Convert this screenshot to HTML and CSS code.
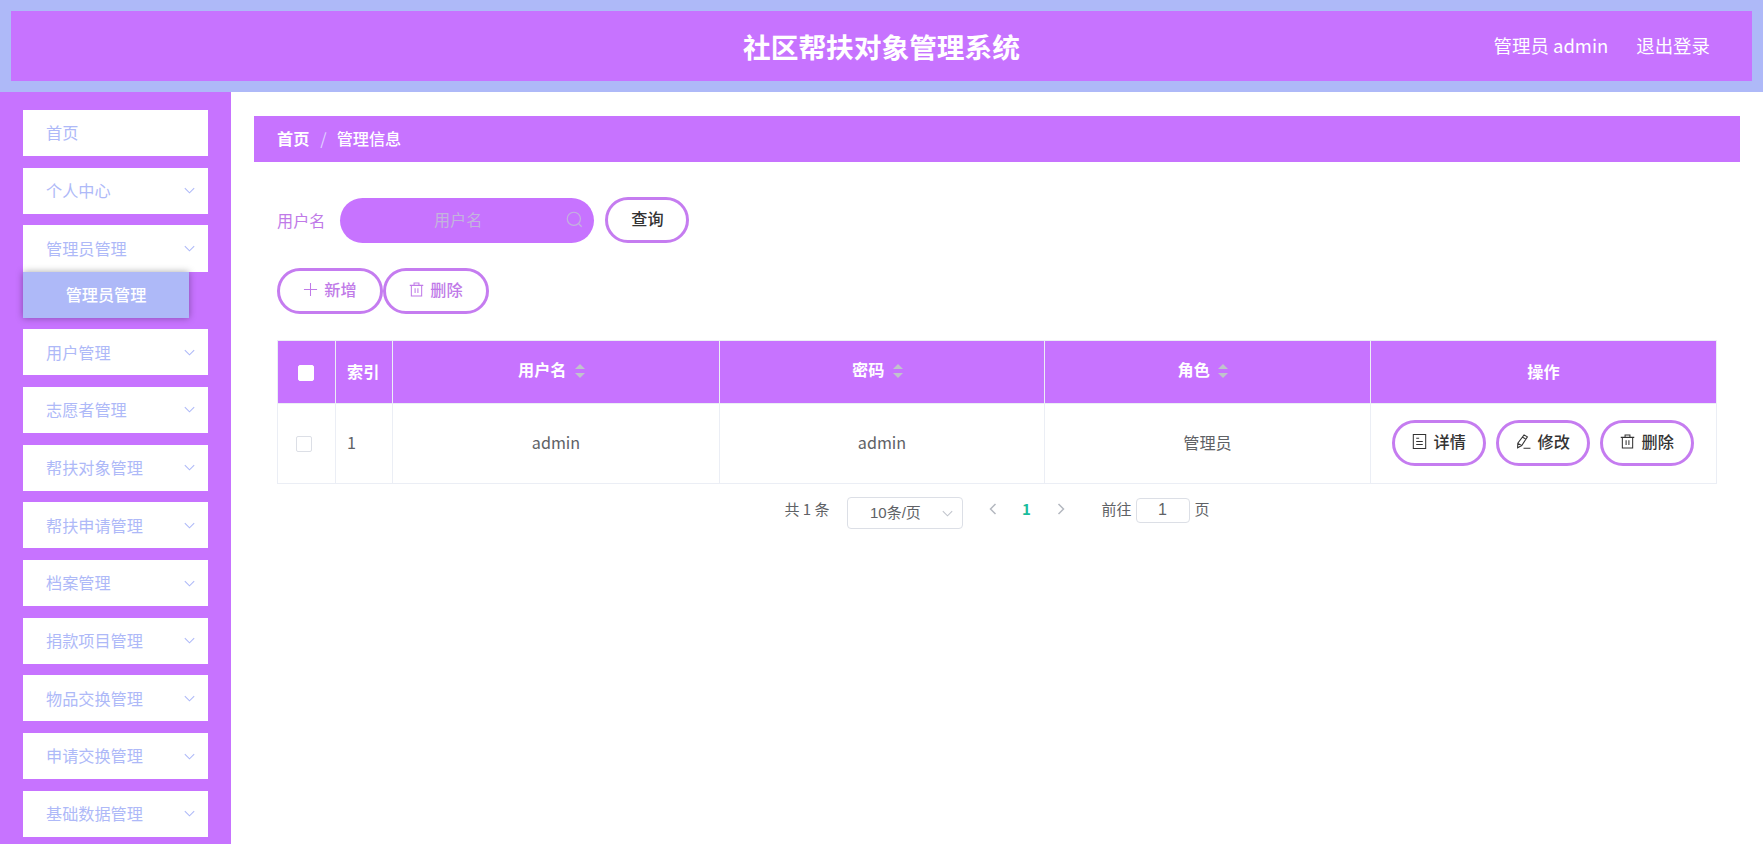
FILE: index.html
```
<!DOCTYPE html>
<html lang="zh-CN">
<head>
<meta charset="utf-8">
<title>社区帮扶对象管理系统</title>
<link rel="stylesheet" href="styles.css">
</head>
<body>
<svg class="defs" width="0" height="0">
  <symbol id="down" viewBox="0 0 16 16"><path d="M3 5.4 8 10.4 13 5.4"/></symbol>
  <symbol id="trash" viewBox="0 0 16 16"><path d="M.8 3.6H15.2M2.5 3.6V15H13.5V3.6M5.4 3.6V1H10.6V3.6M6.5 6.7V11.7M9.5 6.7V11.7"/></symbol>
  <symbol id="plus" viewBox="0 0 16 16"><path d="M8 1V15M1 8H15"/></symbol>
  <symbol id="doc" viewBox="0 0 16 16"><path d="M1.4 .6H14.6V15.4H1.4ZM4.5 4.6H7.6M4.5 8H11.5M4.5 11.2H11.5"/></symbol>
  <symbol id="edit" viewBox="0 0 16 16"><path d="M8.6 .9 12.2 3 6.1 12.3 1.7 14.7 1.9 9.8ZM7 3.4 10.6 5.5M2.1 10 5.9 12.3M8 15.2H15.4"/></symbol>
  <symbol id="search" viewBox="0 0 16 16"><circle cx="7.4" cy="7.4" r="6.2"/><path d="M12 12 14.8 14.8"/></symbol>
</svg>
<header class="header">
  <h1 class="title">社区帮扶对象管理系统</h1>
  <div class="account"><span>管理员 admin</span><span>退出登录</span></div>
</header>
<div class="layout">
  <nav class="sidebar">
    <div class="item">首页</div>
    <div class="item">个人中心<svg class="arrow"><use href="#down"/></svg></div>
    <div class="group">
      <div class="item">管理员管理<svg class="arrow"><use href="#down"/></svg></div>
      <div class="subitem">管理员管理</div>
    </div>
    <div class="item">用户管理<svg class="arrow"><use href="#down"/></svg></div>
    <div class="item">志愿者管理<svg class="arrow"><use href="#down"/></svg></div>
    <div class="item">帮扶对象管理<svg class="arrow"><use href="#down"/></svg></div>
    <div class="item">帮扶申请管理<svg class="arrow"><use href="#down"/></svg></div>
    <div class="item">档案管理<svg class="arrow"><use href="#down"/></svg></div>
    <div class="item">捐款项目管理<svg class="arrow"><use href="#down"/></svg></div>
    <div class="item">物品交换管理<svg class="arrow"><use href="#down"/></svg></div>
    <div class="item">申请交换管理<svg class="arrow"><use href="#down"/></svg></div>
    <div class="item">基础数据管理<svg class="arrow"><use href="#down"/></svg></div>
  </nav>
  <main class="main">
    <div class="breadcrumb"><b>首页</b><span class="slash">/</span><span class="current">管理信息</span></div>
    <div class="content">
      <div class="search">
        <span class="label">用户名</span>
        <div class="field"><span class="placeholder">用户名</span><svg class="icon"><use href="#search"/></svg></div>
        <button class="btn query">查询</button>
      </div>
      <div class="tools">
        <button class="btn tool"><svg class="icon"><use href="#plus"/></svg>新增</button>
        <button class="btn tool"><svg class="icon"><use href="#trash"/></svg>删除</button>
      </div>
      <div class="table">
        <div class="row head">
          <div class="cell check"><i class="box"></i></div>
          <div class="cell index">索引</div>
          <div class="cell sortable">用户名<i class="sort"></i></div>
          <div class="cell sortable">密码<i class="sort"></i></div>
          <div class="cell sortable">角色<i class="sort"></i></div>
          <div class="cell">操作</div>
        </div>
        <div class="row body">
          <div class="cell check"><i class="box"></i></div>
          <div class="cell index">1</div>
          <div class="cell">admin</div>
          <div class="cell">admin</div>
          <div class="cell">管理员</div>
          <div class="cell actions">
            <button class="btn act"><svg class="icon"><use href="#doc"/></svg>详情</button>
            <button class="btn act"><svg class="icon"><use href="#edit"/></svg>修改</button>
            <button class="btn act"><svg class="icon"><use href="#trash"/></svg>删除</button>
          </div>
        </div>
      </div>
      <div class="pager">
        <span class="total">共 1 条</span>
        <div class="size"><span>10条/页</span><svg class="arrow"><use href="#down"/></svg></div>
        <svg class="page-arrow" viewBox="0 0 10 14"><path d="M7.5 2 2.5 7 7.5 12"/></svg>
        <b class="page">1</b>
        <svg class="page-arrow" viewBox="0 0 10 14"><path d="M2.5 2 7.5 7 2.5 12"/></svg>
        <span class="goto">前往</span>
        <span class="jump">1</span>
        <span>页</span>
      </div>
    </div>
  </main>
</div>
</body>
</html>
```
FILE: styles.css
```
* { box-sizing: border-box; }
body {
  margin: 0;
  height: 844px;
  overflow: hidden;
  background: #fff;
  color: #606266;
  font: 16.15px/1.5 "Noto Sans CJK SC", sans-serif;
}
svg { fill: none; stroke: currentColor; flex: none; }
.defs { position: absolute; }
.header {
  height: 92px;
  border: 11.5px solid #aeb9f8;
  background: #c773ff;
  color: #fff;
  display: grid;
  grid-template-columns: 1fr auto 1fr;
  align-items: center;
}
.title { grid-column: 2; margin: 0; font-size: 27.7px; line-height: 40px; font-weight: 700; }
.account { display: flex; justify-content: flex-end; gap: 28px; padding: 0 42px 0 0; font-size: 18.46px; }
.layout { display: flex; height: 752px; }
.sidebar {
  width: 231px;
  background: #c773ff;
  padding: 18px 23px 0;
  display: flex;
  flex-direction: column;
  gap: 11.55px;
  flex: none;
}
.item {
  height: 46.15px;
  flex: none;
  background: #fff;
  color: #aeb9f8;
  display: flex;
  align-items: center;
  justify-content: space-between;
  padding: 0 11px 1px 23px;
}
.arrow { width: 15px; height: 15px; stroke-width: 1.1; }
.item .arrow { margin-top: 1px; }
.subitem {
  width: 166px;
  height: 46.15px;
  background: #aeb9f8;
  color: #fff;
  font-weight: 500;
  display: flex;
  align-items: center;
  justify-content: center;
  box-shadow: 0 0 7px rgba(0, 0, 0, .35);
}
.main { flex: 1; padding: 24px 23px 0; }
.breadcrumb {
  height: 46px;
  background: #c773ff;
  color: #fff;
  display: flex;
  align-items: center;
  padding: 0 23px 1px;
}
.slash { margin: 0 10px 0 11px; color: #e0d3ff; }
.current { font-weight: 500; }
.content { padding: 35px 23px 0; }
.search { display: flex; align-items: center; height: 46px; }
.label { color: #c07ae8; margin-right: 15px; }
.field {
  width: 253.5px;
  height: 45px;
  border-radius: 23px;
  background: #c773ff;
  color: #c3b3dd;
  display: flex;
  align-items: center;
  padding: 0 11px 2px 10px;
  margin-right: 11.5px;
}
.placeholder { flex: 1; text-align: center; }
.field .icon { width: 17px; height: 17px; }
.icon { width: 15px; height: 15px; stroke-width: 1.1; }
.btn {
  height: 46px;
  border: 3px solid #c57cf0;
  border-radius: 23px;
  background: #fff;
  color: #333;
  font: 500 16.15px/24px "Noto Sans CJK SC", sans-serif;
  display: flex;
  align-items: center;
  justify-content: center;
  padding: 0 0 4px;
  gap: 6.5px;
}
.btn .icon { margin-top: 1px; }
.query { width: 84px; }
.tools { display: flex; margin-top: 25px; gap: .5px; }
.tool { width: 105.5px; color: #c07ae8; }
.table { margin-top: 26px; border: 1px solid #ebeef5; border-width: 1px 0 0 1px; }
.row { display: grid; grid-template-columns: 58px 57px 327px 325px 326px 1fr; }
.cell {
  border: 1px solid #ebeef5;
  border-width: 0 1px 1px 0;
  display: flex;
  align-items: center;
  justify-content: center;
}
.head { height: 63px; background: #c773ff; color: #fff; font-weight: 700; }
.head .cell { padding-bottom: 1px; }
.body { height: 80px; }
.body .cell { padding-bottom: 3px; }
.body .actions { padding: 0 1px 1px 0; }
.cell.index { justify-content: flex-start; padding-left: 11px; }
.head .sortable { padding: 0 9px 5px 0; }
.box { width: 16px; height: 16px; border: 1px solid #dcdfe6; border-radius: 2px; background: #fff; }
.body .check { padding: 0 5px 0 0; }
.head .check { padding: 1px 1px 0 0; }
.head .box { border-color: #fff; }
.sort { display: grid; gap: 4px; margin: 2px 0 0 8.5px; }
.sort::before, .sort::after { content: ""; border: 5.5px solid transparent; }
.sort::before { border-top: 0; border-bottom-color: #c0c4cc; }
.sort::after { border-bottom: 0; border-top-color: #c0c4cc; }
.actions { gap: 9.5px; }
.act { width: 94.5px; }
.pager { display: flex; height: 32px; margin-top: 13px; padding-left: 507.5px; font-size: 15px; line-height: 24px; }
.total { width: 62.5px; }
.size {
  width: 115.5px;
  height: 32px;
  border: 1px solid #dcdfe6;
  border-radius: 4px;
  display: flex;
  align-items: center;
  justify-content: space-between;
  padding: 0 7px 0 22px;
  font-family: "Liberation Sans", "Noto Sans CJK SC", sans-serif;
  margin-right: 25px;
}
.size .arrow { color: #c0c4cc; }
.page-arrow { width: 10px; height: 14px; margin-top: 5px; color: #b4b8c0; stroke-width: 1.5; }
.page { width: 58px; text-align: center; color: #1abc9c; }
.goto { margin-left: 36px; }
.jump {
  width: 54px;
  height: 25px;
  margin: 1px 5px 0 4px;
  border: 1px solid #dcdfe6;
  border-radius: 4px;
  text-align: center;
  line-height: 22px;
  font-size: 16px;
  font-family: "Liberation Sans", sans-serif;
}
```
